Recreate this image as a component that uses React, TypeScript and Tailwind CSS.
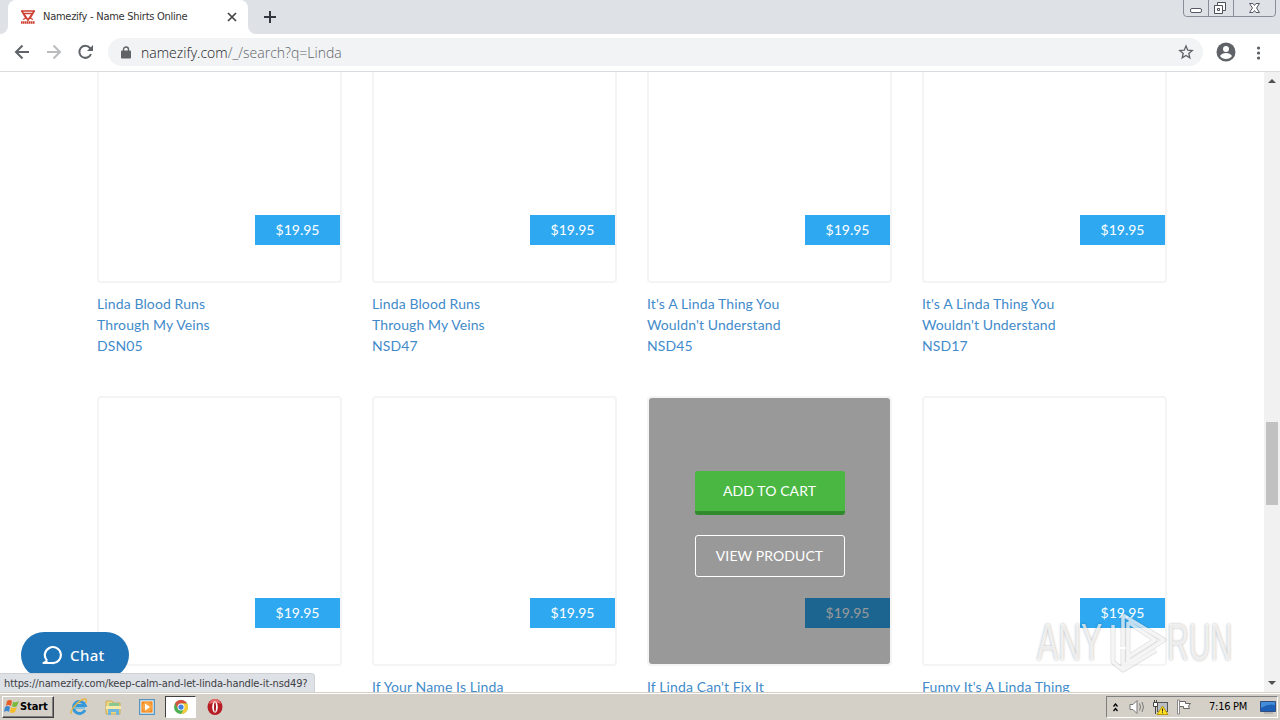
import React from "react";

const ui = "font-['DejaVu_Sans_Condensed','DejaVu_Sans',sans-serif] [font-stretch:condensed]";

type Product = { lines: string[]; hovered?: boolean };

const firstRow: Product[] = [
  { lines: ["Linda Blood Runs", "Through My Veins", "DSN05"] },
  { lines: ["Linda Blood Runs", "Through My Veins", "NSD47"] },
  { lines: ["It's A Linda Thing You", "Wouldn't Understand", "NSD45"] },
  { lines: ["It's A Linda Thing You", "Wouldn't Understand", "NSD17"] },
];
const secondRow: Product[] = [
  { lines: [] },
  { lines: ["If Your Name Is Linda"] },
  { lines: ["If Linda Can't Fix It"], hovered: true },
  { lines: ["Funny It's A Linda Thing"] },
];

function Card({ product }: { product: Product }) {
  return (
    <div className="h-[383px] w-[245px] shrink-0">
      <div className="relative h-[270px] rounded-[4px] border-2 border-[#f4f4f4] bg-white">
        <div className="absolute right-0 bottom-9 flex h-[30px] w-[85px] items-center justify-center bg-[#2ea8f0] pb-[2px] text-[14px] text-white">
          $19.95
        </div>
        {product.hovered && (
          <div className="absolute inset-0 flex flex-col items-center gap-5 rounded-[3px] bg-black/40 pt-[73px] text-[14px] text-white">
            <button className="h-11 w-[150px] rounded-[3px] border-b-4 border-[#318a2d] bg-[#4ab743] pb-[2px] tracking-[0.1px]">ADD TO CART</button>
            <button className="h-[42px] w-[150px] rounded-[3px] border border-white pb-[2px] tracking-[0.1px]">VIEW PRODUCT</button>
          </div>
        )}
      </div>
      <div className="pt-[10px] text-[14px] leading-[21px] tracking-[0.11px] text-[#428bca]">
        {product.lines.map((l) => (
          <div key={l} className="whitespace-nowrap">{l}</div>
        ))}
      </div>
    </div>
  );
}

function TabStrip() {
  return (
    <div className="relative flex h-[34px] bg-[#dee1e6]">
      <svg className="absolute top-[26px] left-0" width="8" height="8"><path d="M8 0v8H0a8 8 0 0 0 8-8" fill="#fff" /></svg>
      <div className="ml-2 flex h-full w-[240px] items-center rounded-t-lg bg-white pl-3">
        <svg width="16" height="16" viewBox="0 0 16 16" fill="none" stroke="#cf3f31">
          <path d="M1 2h14M3 4l5 7 5-7M1.5 1.5 6 9M14.5 1.5 10 9" strokeWidth="1.7" />
          <path d="M4 4.5h8M3 10.5l3-1.5M13 10.5 10 9" strokeWidth="1.3" />
          <path d="M1 13.5h14" strokeWidth="2.5" strokeDasharray="1.6 .4" />
        </svg>
        <span className={`ml-[7px] w-[184px] pt-px text-[11px] tracking-[-0.26px] whitespace-nowrap text-[#333] ${ui}`}>Namezify - Name Shirts Online</span>
        <svg width="10" height="10" viewBox="0 0 10 10"><path d="m1 1 8 8M9 1 1 9" stroke="#444" strokeWidth="1.7" /></svg>
      </div>
      <svg className="mt-[26px]" width="8" height="8"><path d="M0 0v8h8A8 8 0 0 1 0 0" fill="#fff" /></svg>
      <svg className="mt-[11px] ml-2" width="12" height="12"><path d="M6 0v12M0 6h12" stroke="#333740" strokeWidth="2" /></svg>
      <svg className="mr-1 ml-auto" width="93" height="17" fill="none" stroke="#888d98">
        <path d="M.5 0v13q0 3.5 3 3.5h86q3 0 3-3.5V0M25.5 0v16M50.5 0v16" />
        <rect x="7.5" y="8.5" width="11" height="4" rx="1.5" fill="#fff" stroke="#555965" />
        <path d="M34.500 2.500h8v8h-3v3h-8v-8h3z" fill="#fff" stroke="#4c505b" />
        <path d="M34.500 5.500h5v5M34.500 8.500h2v2h-2z" stroke="#4c505b" />
        <path d="M66.500 3.500h3.500l1.500 2 1.500-2h3.500l-3 4.500 3 4.500h-3.500l-1.500-2-1.500 2h-3.500l3-4.500z" fill="#fff" stroke="#555965" />
      </svg>
    </div>
  );
}

function Toolbar() {
  return (
    <div className="flex h-[38px] items-center border-b border-[#d9dbde] bg-white pl-[14px]">
      <svg className="-mt-[2px]" width="80" height="16" viewBox="0 0 80 16" fill="none" strokeWidth="2">
        <path d="M15 8H2m6.500-6.500L2 8l6.500 6.500" stroke="#5f6368" />
        <path d="M33 8h13m-6.500-6.500L46 8l-6.500 6.500" stroke="#babcbe" />
        <path d="M77 10a6 6 0 1 1-1-6l2 2" stroke="#5f6368" />
        <path d="M79 1v6h-6z" fill="#5f6368" />
      </svg>
      <div className="-mt-px ml-[14px] flex h-7 w-[1095px] items-center rounded-full bg-[#f1f3f4] pl-[13px]">
        <svg width="10" height="13" viewBox="0 0 10 13"><path d="M2.500 6V3.500a2.500 2.500 0 0 1 5 0V6" fill="none" stroke="#5f6368" strokeWidth="1.400" /><rect y="4.500" width="10" height="8" rx="1" fill="#5f6368" /></svg>
        <span className="ml-[10px] font-['Open_Sans',sans-serif] text-[14px] font-light tracking-[0.01px] whitespace-nowrap text-[#5f6368]"><span className="text-[#202124]">namezify.com</span>/_/search?q=Linda</span>
        <svg className="mr-[9px] ml-auto" width="16" height="16" viewBox="0 0 24 24" fill="none" stroke="#5f6368" strokeWidth="2"><path d="m12 3 2.600 6.200 6.700.600-5.100 4.400 1.500 6.600-5.700-3.500-5.700 3.500 1.500-6.600-5.100-4.400 6.700-.600z" /></svg>
      </div>
      <svg className="-mt-[2px] ml-[13px]" width="20" height="20" viewBox="0 0 20 20"><circle cx="10" cy="10" r="9.500" fill="#5f6368" /><circle cx="10" cy="7" r="3" fill="#fff" /><path d="M4 14q2-3 6-3t6 3q-2 3-6 3t-6-3" fill="#fff" /></svg>
      <svg className="ml-5" width="4" height="14" fill="#5f6368"><circle cx="2.500" cy="2" r="1.600" /><circle cx="2.500" cy="7" r="1.600" /><circle cx="2.500" cy="12" r="1.600" /></svg>
    </div>
  );
}

function Watermark() {
  return (
    <div className="absolute top-[537px] left-[1037px] flex items-center font-['Liberation_Sans',sans-serif] text-[52px] leading-[62px] text-white/75 [text-shadow:0_0_3px_rgba(0,0,0,.32)]">
      <span className="w-[70px] origin-left scale-x-[0.61]">ANY</span>
      <svg width="60" height="66" viewBox="0 0 60 66" fill="none" strokeLinejoin="round">
        <path d="M16 6v32M16 6l41 25-41 26V40M21 13v40M6 16v37l10 8 33-20M21 13l27 18-27 17" stroke="#000" strokeOpacity=".13" strokeWidth="5" />
        <path d="M16 6v32M16 6l41 25-41 26V40M21 13v40M6 16v37l10 8 33-20M21 13l27 18-27 17" stroke="#fff" strokeOpacity=".7" strokeWidth="3.500" />
      </svg>
      <span className="w-[64px] origin-left scale-x-[0.58]">RUN</span>
    </div>
  );
}

function Taskbar() {
  return (
    <div className="flex h-7 items-center border-t border-[#d4d0c8] bg-[#d4d0c8] pl-[2px] text-black shadow-[inset_0_1px_#fff]">
      <div className={`mt-px flex h-[22px] w-[52px] items-center border border-t-white border-r-[#404040] border-b-[#404040] border-l-white pl-px text-[11px] font-bold tracking-[-0.1px] shadow-[inset_-1px_-1px_#808080] ${ui}`}>
        <svg className="shrink-0" width="16" height="16" viewBox="0 0 16 16">
          <path d="M3 2q3-2 5 0L7 7Q4 5 2 7z" fill="#e65d27" /><path d="M9 3q3 1 6-1l-2 5q-3 2-5 0z" fill="#7bb83b" />
          <path d="M1 8q3-2 5 0l-1 5q-2-2-5 0z" fill="#3d87cd" /><path d="M7 8q3 2 6 0l-2 5q-3 2-5 0z" fill="#f5bd28" />
        </svg>
        Start
      </div>
      <svg className="mt-px ml-[16px]" width="18" height="18" viewBox="0 0 18 18" fill="none">
        <path d="M15 12a6 6 0 1 1 .2-4.500H5.500" stroke="#3698d9" strokeWidth="3" /><path d="M4 10h11" stroke="#64bce9" strokeWidth="1.500" />
        <path d="M2 15Q-1 16 3 10 10 1 15 1q2 0 1 4" stroke="#e6b540" strokeWidth="1.300" />
      </svg>
      <svg className="mt-px ml-[17px]" width="17" height="17" viewBox="0 0 17 17">
        <path d="M1 2h6l1 2h7v11H1z" fill="#eed783" stroke="#c8ab59" /><path d="M4 4h10v3H4z" fill="#8bc790" /><path d="M1 7h15v3H1z" fill="#f8eaaa" /><path d="M3 16v-6h11v6h-3v-3H6v3z" fill="#71b7dc" />
      </svg>
      <svg className="mt-px ml-[17px]" width="16" height="16" viewBox="0 0 16 16">
        <rect x=".5" y=".5" width="15" height="15" fill="#8cc2e4" stroke="#5795bf" /><rect x="2" y="2" width="12" height="12" fill="#f08a22" stroke="#fff" strokeWidth=".7" /><circle cx="8" cy="8" r="5" fill="#f9a642" /><path d="m6 4.500 5 3.500-5 3.500z" fill="#fff" />
      </svg>
      <div className="mt-px ml-[10px] flex h-[22px] w-[31px] items-center justify-center border border-t-[#404040] border-r-white border-b-white border-l-[#404040] bg-white">
        <svg width="14" height="14" viewBox="0 0 16 16">
          <circle cx="8" cy="8" r="8" fill="#4caf50" /><path d="M1.100 4A8 8 0 0 1 14.900 4H8z" fill="#dd4b3e" /><path d="m1.100 4 3.500 6L8 8V4z" fill="#dd4b3e" /><path d="M14.900 4A8 8 0 0 1 8 16l3.500-6L8 4z" fill="#f8cc37" /><circle cx="8" cy="8" r="4" fill="#fff" /><circle cx="8" cy="8" r="3" fill="#4284e4" />
        </svg>
      </div>
      <svg className="mt-px ml-[11px]" width="16" height="16"><ellipse cx="8" cy="8" rx="7.500" ry="8" fill="#b61d25" /><path d="M2 5q2-5 6-5t6 5q-5-3-12 0" fill="#e76b6c" /><ellipse cx="8" cy="8" rx="2.800" ry="5.800" fill="#fff" /><ellipse cx="8" cy="8" rx="1" ry="4.700" fill="#a81b23" /></svg>
      <div className="mt-px mr-[2px] ml-auto flex h-[22px] w-[172px] items-center border border-t-[#808080] border-r-white border-b-white border-l-[#808080] pl-[6px]">
        <svg width="5" height="9" fill="none" stroke="#000" strokeWidth="1.300"><path d="M.5 3.500 2.500 1l2 2.500M.5 8l2-2.500 2 2.500" /></svg>
        <svg className="ml-[11px]" width="17" height="16" fill="none" stroke="#777"><path d="M1 5.500h3l4-4v13l-4-4H1z" fill="#fff" /><path d="M10.500 4.500q2 3.500 0 7M13 3q3 5 0 10" /></svg>
        <svg className="ml-[6px]" width="17" height="17"><rect x="5.500" y="3.500" width="10" height="9" fill="#b9bec4" stroke="#555" /><path d="M1.500 3.500h4v4h-4zM2.500 1v3M4.500 1v3M3.500 8v7" fill="#fff" stroke="#444" /><path d="m10.500 7 5.500 8.500H5z" fill="#ffe023" stroke="#b99808" /><path d="M10.500 9.500v3M10.500 13.300v1" stroke="#222" /></svg>
        <svg className="ml-[8px]" width="16" height="16"><path d="M2.500 11V2.500h6v2h5L11.500 7l1 2.500h-6v-2h-4" fill="#fff" stroke="#666" /><path d="M.5 1v14h2V1z" fill="#fff" stroke="#888" /></svg>
        <span className={`ml-[16px] w-[43px] text-[11px] tracking-[-0.25px] whitespace-nowrap ${ui}`}>7:16 PM</span>
        <svg className="ml-[8px] shrink-0" width="16" height="14"><path d="M.5 1.500h15v10H.5z" fill="#1c60b7" stroke="#324d80" /><path d="M1 2h14v3Q8 3 1 8z" fill="#438cda" /><path d="M4 13h9" stroke="#999" /></svg>
      </div>
    </div>
  );
}

export default function App() {
  return (
    <div className="flex h-[720px] w-[1280px] flex-col overflow-hidden bg-white">
      <TabStrip />
      <Toolbar />
      <main className="relative flex h-[620px] overflow-hidden">
        <div className="h-[620px] w-[1264px] overflow-hidden pl-[97px] font-['Lato',sans-serif]">
          <div className="-mt-[59px] flex gap-[30px]">{firstRow.map((p, i) => <Card key={i} product={p} />)}</div>
          <div className="flex gap-[30px]">{secondRow.map((p, i) => <Card key={i} product={p} />)}</div>
        </div>
        <div className="flex w-4 flex-col items-center bg-[#f1f1f1] pt-[7px] pb-[7px]">
          <svg width="8" height="4"><path d="m0 4 4-4 4 4z" fill="#505050" /></svg>
          <div className="mt-[339px] h-[83px] w-3 bg-[#c1c1c1]" />
          <svg className="mt-auto" width="8" height="4"><path d="m0 0 4 4 4-4z" fill="#505050" /></svg>
        </div>
        <button className="absolute top-[560px] left-[21px] flex h-[46px] w-[108px] items-center rounded-full bg-[#1f73b7] pl-[21px] font-['Noto_Sans',sans-serif] text-[15px] font-medium tracking-[0.35px] text-white">
          <svg className="mr-[8px]" width="20" height="20" viewBox="0 0 20 20" fill="none"><path d="M5 15.500A8 8 0 1 1 10 18H1.500q3-1.200 3.500-2.500" stroke="#fff" strokeWidth="2.200" strokeLinejoin="round" /></svg>
          Chat
        </button>
        <div className={`absolute top-[601px] left-0 h-[19px] w-[315px] rounded-tr-[4px] border-t border-r border-[#cfd1d5] bg-[#dee1e6] pl-1 text-[11px] leading-[19px] tracking-[-0.12px] whitespace-nowrap text-[#3c4043] ${ui}`}>https://namezify.com/keep-calm-and-let-linda-handle-it-nsd49?</div>
        <Watermark />
      </main>
      <Taskbar />
    </div>
  );
}
